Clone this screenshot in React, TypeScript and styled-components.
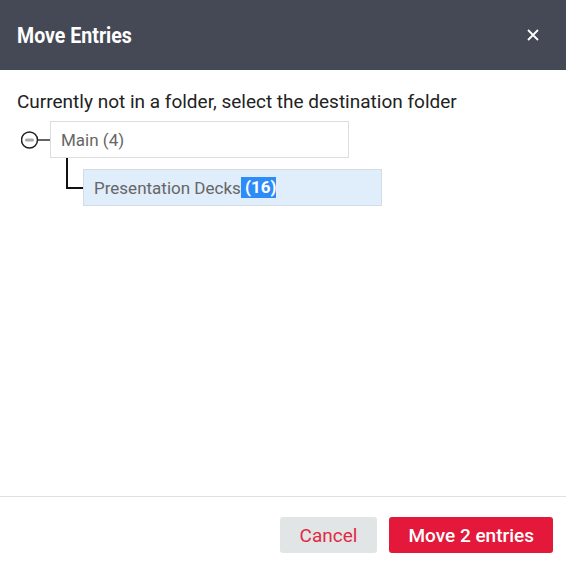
import React from "react";
import styled, { createGlobalStyle } from "styled-components";

const GlobalStyle = createGlobalStyle`
  html, body {
    margin: 0;
    padding: 0;
    background: #ffffff;
  }
  body {
    font-family: Roboto, "Liberation Sans", sans-serif;
  }
  * {
    box-sizing: border-box;
  }
`;

const Dialog = styled.div`
  width: 566px;
  height: 569px;
  display: flex;
  flex-direction: column;
  background: #ffffff;
`;

const Header = styled.header`
  height: 70px;
  flex: none;
  display: flex;
  align-items: center;
  justify-content: space-between;
  padding: 0 26px 0 17px;
  background-color: #444955;
`;

// the original heading is a condensed face, squeeze Roboto to match
const Title = styled.h1`
  margin: 0;
  font-family: Roboto, "Liberation Sans", sans-serif;
  font-size: 22px;
  font-weight: 700;
  color: #ffffff;
  transform: scaleX(0.89);
  transform-origin: left center;
`;

const CloseButton = styled.button`
  border: 0;
  background: none;
  padding: 0;
  width: 14px;
  height: 14px;
  display: flex;
  align-items: center;
  justify-content: center;
  cursor: pointer;
`;

const Body = styled.div`
  flex: 1;
  padding: 21px 17px 0;
`;

const Prompt = styled.p`
  margin: 0 0 8px;
  font-size: 19px;
  line-height: 22px;
  color: #222222;
`;

const TreeRow = styled.div<{ $indent?: number; $gap?: number }>`
  display: flex;
  align-items: center;
  margin-left: ${({ $indent }) => $indent ?? 0}px;
  margin-top: ${({ $gap }) => $gap ?? 0}px;
`;

const Toggle = styled.span`
  width: 29px;
  height: 37px;
  flex: none;
  display: flex;
  align-items: center;
`;

const Connector = styled.span`
  width: 17px;
  height: 31px;
  flex: none;
  align-self: flex-start;
  margin-top: -11px;
  border-left: 2px solid #111111;
  border-bottom: 2px solid #111111;
`;

const Node = styled.div<{ $selected?: boolean }>`
  width: 299px;
  height: 37px;
  display: flex;
  align-items: center;
  padding: 0 10px;
  font-size: 17px;
  color: #666666;
  white-space: pre;
  background: ${({ $selected }) => ($selected ? "#e0edfa" : "#ffffff")};
  border: 1px solid ${({ $selected }) => ($selected ? "#d3dce6" : "#dddddd")};
`;

const Count = styled.span<{ $highlighted?: boolean }>`
  ${({ $highlighted }) =>
    $highlighted &&
    `
    padding: 1px 0;
    line-height: 19px;
    background: #2e8cf8;
    color: #ffffff;
    font-weight: 700;
  `}
`;

const Footer = styled.footer`
  flex: none;
  height: 73px;
  border-top: 1px solid #e0e0e0;
  display: flex;
  align-items: flex-start;
  justify-content: flex-end;
  gap: 12px;
  padding: 20px 13px 0 0;
`;

const Button = styled.button<{ $primary?: boolean }>`
  height: 36px;
  border: 0;
  border-radius: 3px;
  padding: 0 ${({ $primary }) => ($primary ? 19 : 20)}px;
  font-family: Roboto, "Liberation Sans", sans-serif;
  font-size: 19px;
  cursor: pointer;
  background: ${({ $primary }) => ($primary ? "#e3183a" : "#e2e5e6")};
  color: ${({ $primary }) => ($primary ? "#ffffff" : "#e12a45")};
  font-weight: ${({ $primary }) => ($primary ? 500 : 400)};
`;

const App = () => {
  return (
    <>
      <GlobalStyle />
      <Dialog>
        <Header>
          <Title>Move Entries</Title>
          <CloseButton aria-label="Close">
            <svg width="12" height="12" viewBox="0 0 12 12">
              <path d="M1 1 L11 11 M11 1 L1 11" stroke="#ffffff" strokeWidth="1.8" />
            </svg>
          </CloseButton>
        </Header>
        <Body>
          <Prompt>Currently not in a folder, select the destination folder</Prompt>
          <TreeRow $indent={4}>
            <Toggle>
              <svg width="29" height="20" viewBox="0 0 29 20">
                <circle cx="8.5" cy="10" r="8" fill="#ffffff" stroke="#222222" strokeWidth="1.5" />
                <rect x="4" y="8.4" width="9" height="3.2" rx="1.5" fill="#a8a8a8" />
                <line x1="16.5" y1="10" x2="29" y2="10" stroke="#222222" strokeWidth="1.4" />
              </svg>
            </Toggle>
            <Node>
              Main (4)
            </Node>
          </TreeRow>
          <TreeRow $indent={49} $gap={11}>
            <Connector />
            <Node $selected>
              Presentation Decks<Count $highlighted> (16)</Count>
            </Node>
          </TreeRow>
        </Body>
        <Footer>
          <Button>Cancel</Button>
          <Button $primary>Move 2 entries</Button>
        </Footer>
      </Dialog>
    </>
  );
};

export default App;
